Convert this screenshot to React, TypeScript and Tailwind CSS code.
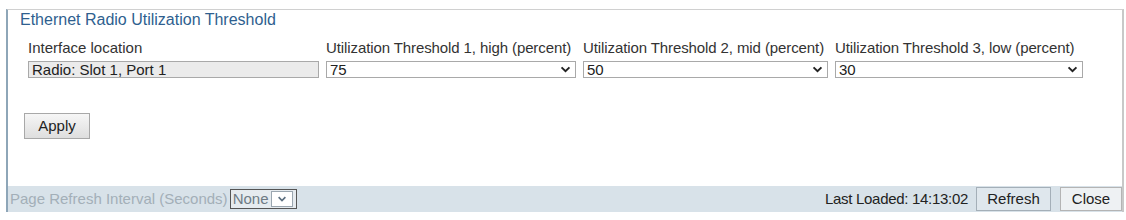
import React from "react";

function Chevron({ className = "" }: { className?: string }) {
  return (
    <svg viewBox="0 0 12 8" className={className} fill="none" stroke="currentColor" strokeWidth="2.2">
      <path d="M1.5 1.5 6 6l4.5-4.5" />
    </svg>
  );
}

const columns = [
  { label: "Utilization Threshold 1, high (percent)", value: "75", width: "w-[250px]" },
  { label: "Utilization Threshold 2, mid (percent)", value: "50", width: "w-[245px]" },
  { label: "Utilization Threshold 3, low (percent)", value: "30", width: "w-[248px]" },
];

export default function App() {
  return (
    <div className="h-[220px] w-[1126px] bg-white pl-[6px] pr-[2px] pt-[9px] font-['Liberation_Sans',Arial,sans-serif]">
      <div className="flex h-[203px] flex-col border-l-2 border-r-2 border-t border-l-[#8ea6b8] border-r-[#c8c8c8] border-t-[#d0d0d0]">
        <div className="flex-1 pl-[12px]">
          <h1 className="mt-[1px] text-[16px] leading-[18px] text-[#2f5f8f]">Ethernet Radio Utilization Threshold</h1>
          <div className="mt-[11px] flex gap-[7px] pl-[8px]">
            <div className="flex w-[291px] flex-col gap-[5px]">
              <span className="text-[15px] leading-[16px] text-[#333]">Interface location</span>
              <div className="flex h-[17px] items-center border border-[#a9a9a9] bg-[#ebebeb] pl-[3px]">
                <span className="text-[15px] leading-none text-[#222]">Radio: Slot 1, Port 1</span>
              </div>
            </div>
            {columns.map((c) => (
              <div key={c.label} className={`flex flex-col gap-[5px] ${c.width}`}>
                <span className="whitespace-nowrap text-[15px] leading-[16px] tracking-[-0.1px] text-[#333]">{c.label}</span>
                <div className="flex h-[17px] items-center justify-between border border-[#a9a9a9] bg-white pl-[3px] pr-[4px]">
                  <span className="text-[15px] leading-none text-[#222]">{c.value}</span>
                  <Chevron className="h-[7px] w-[11px] text-[#222]" />
                </div>
              </div>
            ))}
          </div>
          <button className="mt-[35px] ml-[4px] h-[26px] w-[66px] border border-[#a8a8a8] bg-gradient-to-b from-[#f6f6f6] to-[#dedede] text-[15px] text-[#222]">
            Apply
          </button>
        </div>
        <div className="flex h-[26px] items-center justify-between bg-[#d8e2e9] pl-[2px]">
          <div className="flex items-center gap-[2px]">
            <span className="text-[15px] text-[#a3afb8]">Page Refresh Interval (Seconds)</span>
            <div className="flex h-[20px] items-center border border-[#555] bg-[#e6ebef] pl-[2px] pr-[3px]">
              <span className="text-[15px] text-[#6f7b85]">None</span>
              <div className="ml-[3px] flex h-[16px] w-[22px] items-center justify-center border border-[#9aa6b0] bg-white">
                <Chevron className="h-[6px] w-[10px] text-[#5c6f80]" />
              </div>
            </div>
          </div>
          <div className="flex h-full items-center">
            <span className="mr-[8px] text-[15px] tracking-[-0.3px] text-[#222]">Last Loaded: 14:13:02</span>
            <button className="h-[24px] w-[75px] border border-[#a4afb8] bg-[#dfe7ed] text-[15px] text-[#222]">Refresh</button>
            <button className="ml-[9px] h-[24px] w-[62px] border border-[#b4b4b4] bg-[#eef1f3] text-[15px] text-[#222]">Close</button>
          </div>
        </div>
      </div>
    </div>
  );
}
